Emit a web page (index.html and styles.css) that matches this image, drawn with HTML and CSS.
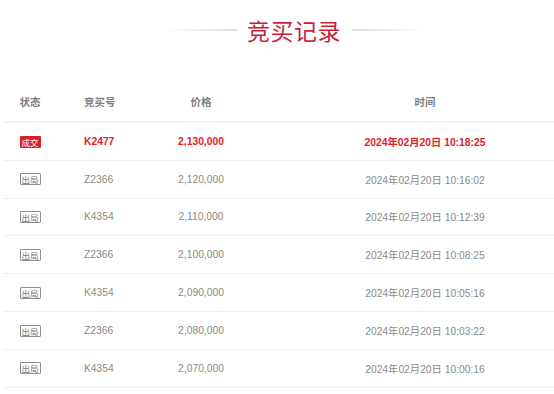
FILE: index.html
```html
<!DOCTYPE html>
<html lang="zh">
<head>
<meta charset="utf-8">
<link rel="stylesheet" href="styles.css">
</head>
<body>
<div class="wrap">
  <div class="title">
    <span class="line line-left"></span>
    <h2>竞买记录</h2>
    <span class="line line-right"></span>
  </div>
  <div class="table">
    <div class="row head">
      <div>状态</div><div class="num">竞买号</div><div>价格</div><div class="time">时间</div>
    </div>
    <div class="row win">
      <div><span class="badge deal">成交</span></div><div class="num">K2477</div><div>2,130,000</div><div class="time">2024年02月20日 10:18:25</div>
    </div>
    <div class="row">
      <div><span class="badge out">出局</span></div><div class="num">Z2366</div><div>2,120,000</div><div class="time">2024年02月20日 10:16:02</div>
    </div>
    <div class="row">
      <div><span class="badge out">出局</span></div><div class="num">K4354</div><div>2,110,000</div><div class="time">2024年02月20日 10:12:39</div>
    </div>
    <div class="row">
      <div><span class="badge out">出局</span></div><div class="num">Z2366</div><div>2,100,000</div><div class="time">2024年02月20日 10:08:25</div>
    </div>
    <div class="row">
      <div><span class="badge out">出局</span></div><div class="num">K4354</div><div>2,090,000</div><div class="time">2024年02月20日 10:05:16</div>
    </div>
    <div class="row">
      <div><span class="badge out">出局</span></div><div class="num">Z2366</div><div>2,080,000</div><div class="time">2024年02月20日 10:03:22</div>
    </div>
    <div class="row">
      <div><span class="badge out">出局</span></div><div class="num">K4354</div><div>2,070,000</div><div class="time">2024年02月20日 10:00:16</div>
    </div>
  </div>
</div>
</body>
</html>
```
FILE: styles.css
```css
html, body {
  margin: 0;
  padding: 0;
  background: #fff;
}
body {
  font-family: "Liberation Sans", "Noto Sans CJK SC", sans-serif;
  color: #8a8a8a;
}
.wrap {
  margin-left: 3px;
}
.title {
  display: flex;
  align-items: center;
  justify-content: center;
  gap: 10px;
  padding-top: 12px;
  padding-left: 32px;
  height: 36px;
}
.title h2 {
  margin: 0;
  font-family: "Noto Sans CJK SC", sans-serif;
  font-weight: 400;
  font-size: 23px;
  line-height: 36px;
  color: #c81f3e;
  letter-spacing: 0.5px;
  padding-right: 1px;
}
.line {
  width: 73px;
  height: 2px;
}
.line-left {
  background: linear-gradient(to right, rgba(221,221,221,0), #dcdcdc);
}
.line-right {
  background: linear-gradient(to right, #dcdcdc, rgba(221,221,221,0));
}
.table {
  margin-top: 33px;
}
.row {
  display: grid;
  grid-template-columns: 54px 84px 120px 1fr;
  align-items: center;
  text-align: center;
  height: 36.8px;
  border-bottom: 1px solid #f0f0f0;
  font-size: 10.3px;
}
.row .num {
  text-align: left;
  padding-left: 27px;
}
.row .time {
  padding-left: 35px;
}
.row.head {
  height: 40px;
  border-bottom: 2px solid #f2f2f2;
  font-weight: 700;
  font-size: 10.5px;
  color: #808080;
}
.row.win {
  color: #e2202a;
  font-weight: 700;
}
.badge {
  display: inline-block;
  box-sizing: border-box;
  width: 21px;
  height: 12px;
  line-height: 12px;
  font-size: 8.5px;
  font-family: "Noto Sans CJK SC", sans-serif;
  font-weight: 400;
  vertical-align: middle;
  border-radius: 1px;
}
.badge.deal {
  background: #d8202a;
  color: #fff;
}
.badge.out {
  border: 1px solid #909090;
  color: #7a7a7a;
  line-height: 10px;
}
```
